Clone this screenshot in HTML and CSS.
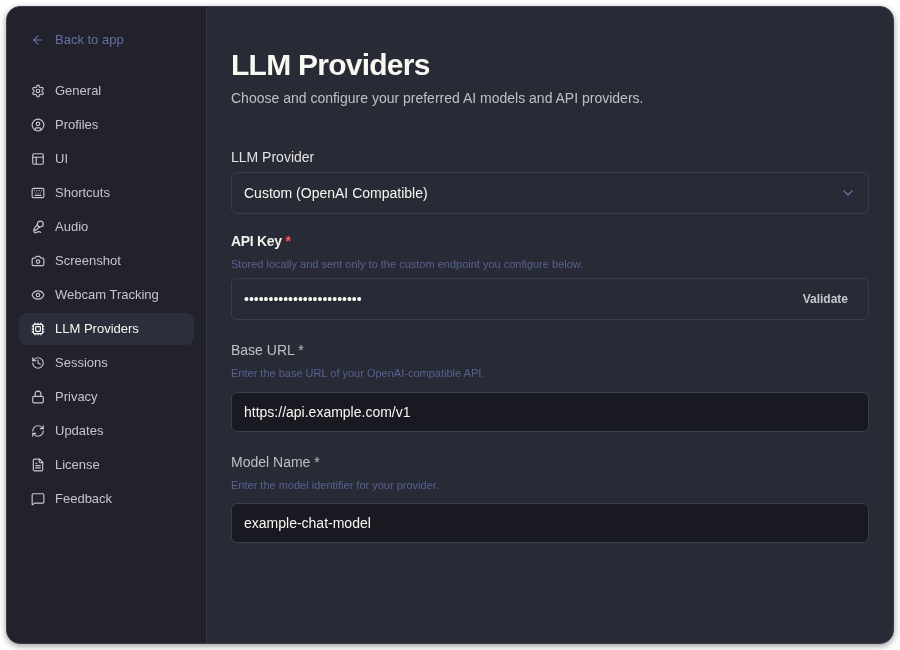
FILE: index.html
```html
<!DOCTYPE html>
<html lang="en">
<head>
<meta charset="utf-8">
<title>LLM Providers</title>
<link rel="stylesheet" href="styles.css">
</head>
<body>
<div class="window">
  <aside class="sidebar">
    <a class="back">
      <svg class="icon" viewBox="0 0 24 24"><path d="m12 19-7-7 7-7"/><path d="M19 12H5"/></svg>
      <span>Back to app</span>
    </a>
    <nav class="nav">
      <a class="item"><svg class="icon" viewBox="0 0 24 24"><path d="M12.22 2h-.44a2 2 0 0 0-2 2v.18a2 2 0 0 1-1 1.73l-.43.25a2 2 0 0 1-2 0l-.15-.08a2 2 0 0 0-2.73.73l-.22.38a2 2 0 0 0 .73 2.73l.15.1a2 2 0 0 1 1 1.72v.51a2 2 0 0 1-1 1.74l-.15.09a2 2 0 0 0-.73 2.73l.22.38a2 2 0 0 0 2.73.73l.15-.08a2 2 0 0 1 2 0l.43.25a2 2 0 0 1 1 1.73V20a2 2 0 0 0 2 2h.44a2 2 0 0 0 2-2v-.18a2 2 0 0 1 1-1.73l.43-.25a2 2 0 0 1 2 0l.15.08a2 2 0 0 0 2.73-.73l.22-.39a2 2 0 0 0-.73-2.73l-.15-.08a2 2 0 0 1-1-1.74v-.5a2 2 0 0 1 1-1.74l.15-.09a2 2 0 0 0 .73-2.73l-.22-.38a2 2 0 0 0-2.73-.73l-.15.08a2 2 0 0 1-2 0l-.43-.25a2 2 0 0 1-1-1.73V4a2 2 0 0 0-2-2z"/><circle cx="12" cy="12" r="3"/></svg><span>General</span></a>
      <a class="item"><svg class="icon" viewBox="0 0 24 24"><circle cx="12" cy="12" r="10"/><circle cx="12" cy="10" r="3"/><path d="M7 20.662V19a2 2 0 0 1 2-2h6a2 2 0 0 1 2 2v1.662"/></svg><span>Profiles</span></a>
      <a class="item"><svg class="icon" viewBox="0 0 24 24"><rect x="3" y="3" width="18" height="18" rx="2"/><path d="M3 9h18"/><path d="M9 21V9"/></svg><span>UI</span></a>
      <a class="item"><svg class="icon" viewBox="0 0 24 24"><path d="M10 8h.01"/><path d="M12 12h.01"/><path d="M14 8h.01"/><path d="M16 12h.01"/><path d="M18 8h.01"/><path d="M6 8h.01"/><path d="M7 16h10"/><path d="M8 12h.01"/><rect x="2" y="4" width="20" height="16" rx="2"/></svg><span>Shortcuts</span></a>
      <a class="item"><svg class="icon" viewBox="0 0 24 24"><path d="m11 7.601-5.994 8.19a1 1 0 0 0 .1 1.298l.817.818a1 1 0 0 0 1.314.087L15.09 12"/><path d="M16.5 21.174C15.5 20.5 14.372 20 13 20c-2.058 0-3.928 2.356-6 2-2.072-.356-2.775-3.369-1.5-4.5"/><circle cx="16" cy="7" r="5"/></svg><span>Audio</span></a>
      <a class="item"><svg class="icon" viewBox="0 0 24 24"><path d="M13.997 4a2 2 0 0 1 1.76 1.05l.486.9A2 2 0 0 0 18.003 7H20a2 2 0 0 1 2 2v9a2 2 0 0 1-2 2H4a2 2 0 0 1-2-2V9a2 2 0 0 1 2-2h1.997a2 2 0 0 0 1.759-1.048l.489-.904A2 2 0 0 1 10.004 4z"/><circle cx="12" cy="13" r="3"/></svg><span>Screenshot</span></a>
      <a class="item"><svg class="icon" viewBox="0 0 24 24"><path d="M2.062 12.348a1 1 0 0 1 0-.696 10.75 10.75 0 0 1 19.876 0 1 1 0 0 1 0 .696 10.75 10.75 0 0 1-19.876 0"/><circle cx="12" cy="12" r="3"/></svg><span>Webcam Tracking</span></a>
      <a class="item active"><svg class="icon" viewBox="0 0 24 24"><path d="M12 20v2"/><path d="M12 2v2"/><path d="M17 20v2"/><path d="M17 2v2"/><path d="M2 12h2"/><path d="M2 17h2"/><path d="M2 7h2"/><path d="M20 12h2"/><path d="M20 17h2"/><path d="M20 7h2"/><path d="M7 20v2"/><path d="M7 2v2"/><rect x="4" y="4" width="16" height="16" rx="2"/><rect x="8" y="8" width="8" height="8" rx="1"/></svg><span>LLM Providers</span></a>
      <a class="item"><svg class="icon" viewBox="0 0 24 24"><path d="M3 12a9 9 0 1 0 9-9 9.75 9.75 0 0 0-6.74 2.74L3 8"/><path d="M3 3v5h5"/><path d="M12 7v5l4 2"/></svg><span>Sessions</span></a>
      <a class="item"><svg class="icon" viewBox="0 0 24 24"><rect x="3" y="11" width="18" height="11" rx="2"/><path d="M7 11V7a5 5 0 0 1 10 0v4"/></svg><span>Privacy</span></a>
      <a class="item"><svg class="icon" viewBox="0 0 24 24"><path d="M3 12a9 9 0 0 1 9-9 9.75 9.75 0 0 1 6.74 2.74L21 8"/><path d="M21 3v5h-5"/><path d="M21 12a9 9 0 0 1-9 9 9.75 9.75 0 0 1-6.74-2.74L3 16"/><path d="M8 16H3v5"/></svg><span>Updates</span></a>
      <a class="item"><svg class="icon" viewBox="0 0 24 24"><path d="M15 2H6a2 2 0 0 0-2 2v16a2 2 0 0 0 2 2h12a2 2 0 0 0 2-2V7z"/><path d="M14 2v4a2 2 0 0 0 2 2h4"/><path d="M10 9H8"/><path d="M16 13H8"/><path d="M16 17H8"/></svg><span>License</span></a>
      <a class="item"><svg class="icon" viewBox="0 0 24 24"><path d="M22 17a2 2 0 0 1-2 2H6.828a2 2 0 0 0-1.414.586l-2.202 2.202A.71.71 0 0 1 2 21.286V5a2 2 0 0 1 2-2h16a2 2 0 0 1 2 2z"/></svg><span>Feedback</span></a>
    </nav>
  </aside>
  <main class="main">
    <h1 class="title">LLM Providers</h1>
    <p class="subtitle">Choose and configure your preferred AI models and API providers.</p>
    <section class="field field-provider">
      <div class="label label-light">LLM Provider</div>
      <div class="control select">
        <span>Custom (OpenAI Compatible)</span>
        <svg class="chevron" viewBox="0 0 24 24"><path d="m6 9 6 6 6-6"/></svg>
      </div>
    </section>
    <section class="field field-key">
      <div class="label label-strong">API Key <span class="req">*</span></div>
      <div class="hint">Stored locally and sent only to the custom endpoint you configure below.</div>
      <div class="control key">
        <span>••••••••••••••••••••••••</span>
        <span class="validate">Validate</span>
      </div>
    </section>
    <section class="field field-url">
      <div class="label">Base URL *</div>
      <div class="hint hint-loose">Enter the base URL of your OpenAI-compatible API.</div>
      <div class="control input">https://api.example.com/v1</div>
    </section>
    <section class="field field-model">
      <div class="label">Model Name *</div>
      <div class="hint hint-model">Enter the model identifier for your provider.</div>
      <div class="control input">example-chat-model</div>
    </section>
  </main>
</div>
</body>
</html>
```
FILE: styles.css
```css
* { box-sizing: border-box; }
html, body { height: 100%; }
body {
  margin: 0;
  padding: 6px;
  background: #fff;
  font-family: "Liberation Sans", Arial, sans-serif;
  overflow: hidden;
}
.window {
  display: flex;
  height: 638px;
  background: #282a36;
  border: 1px solid #3a3d4d;
  border-radius: 14px;
  box-shadow: 0 2px 6px rgba(0, 0, 0, 0.4);
  overflow: hidden;
  will-change: transform;
}
.sidebar {
  flex: 0 0 200px;
  padding: 17px 12px 16px;
  background: #21222c;
  border-right: 1px solid #353746;
}
.back, .item {
  display: flex;
  align-items: center;
  gap: 10px;
  height: 32px;
  padding: 0 12px;
  font-size: 13px;
  border-radius: 8px;
}
.back span, .item span {
  line-height: 15px;
  padding-bottom: 1px;
}
.back { color: #6272a4; }
.nav {
  display: flex;
  flex-direction: column;
  gap: 2px;
  margin-top: 19px;
}
.item { color: #c5c6ca; }
.item.active { background: #2c2e3b; color: #f8f8f2; }
.icon {
  flex: 0 0 14px;
  width: 14px;
  height: 14px;
  fill: none;
  stroke: currentColor;
  stroke-width: 2;
  stroke-linecap: round;
  stroke-linejoin: round;
}
.main {
  flex: 1;
  padding: 40px 24px 0;
  color: #f8f8f2;
}
.title {
  margin: 0;
  font-size: 30px;
  line-height: 36px;
  font-weight: 700;
  letter-spacing: -0.75px;
  color: #f8f8f2;
}
.subtitle {
  margin: 5px 0 0;
  font-size: 14px;
  line-height: 20px;
  color: #bfc0c5;
}
.field { display: flex; flex-direction: column; }
.field-provider { margin-top: 39px; }
.field-key { margin-top: 17px; }
.field-url { margin-top: 20px; }
.field-model { margin-top: 20px; }
.label {
  font-size: 14px;
  line-height: 20px;
  color: #bfc0c5;
}
.label-light { color: #e3e3df; margin-bottom: 5px; }
.label-strong { font-weight: 700; color: #f0f0ec; letter-spacing: -0.3px; }
.req { color: #ff5555; }
.hint {
  margin-top: 6px;
  margin-bottom: 7px;
  font-size: 11px;
  line-height: 14px;
  color: #56628f;
}
.hint-loose { margin-bottom: 12px; }
.hint-model { margin-bottom: 11px; }
.control {
  display: flex;
  align-items: center;
  justify-content: space-between;
  padding: 0 12px;
  font-size: 14px;
  color: #f8f8f2;
  border: 1px solid #3a3d4d;
  border-radius: 6px;
}
.select, .key { height: 42px; background: #282a36; }
.input { height: 40px; background: #191a21; }
.chevron {
  width: 16px;
  height: 16px;
  fill: none;
  stroke: #6272a4;
  stroke-width: 2;
  stroke-linecap: round;
  stroke-linejoin: round;
}
.validate {
  margin-right: 8px;
  font-size: 12px;
  font-weight: 700;
  color: #c5c6ca;
}
```
